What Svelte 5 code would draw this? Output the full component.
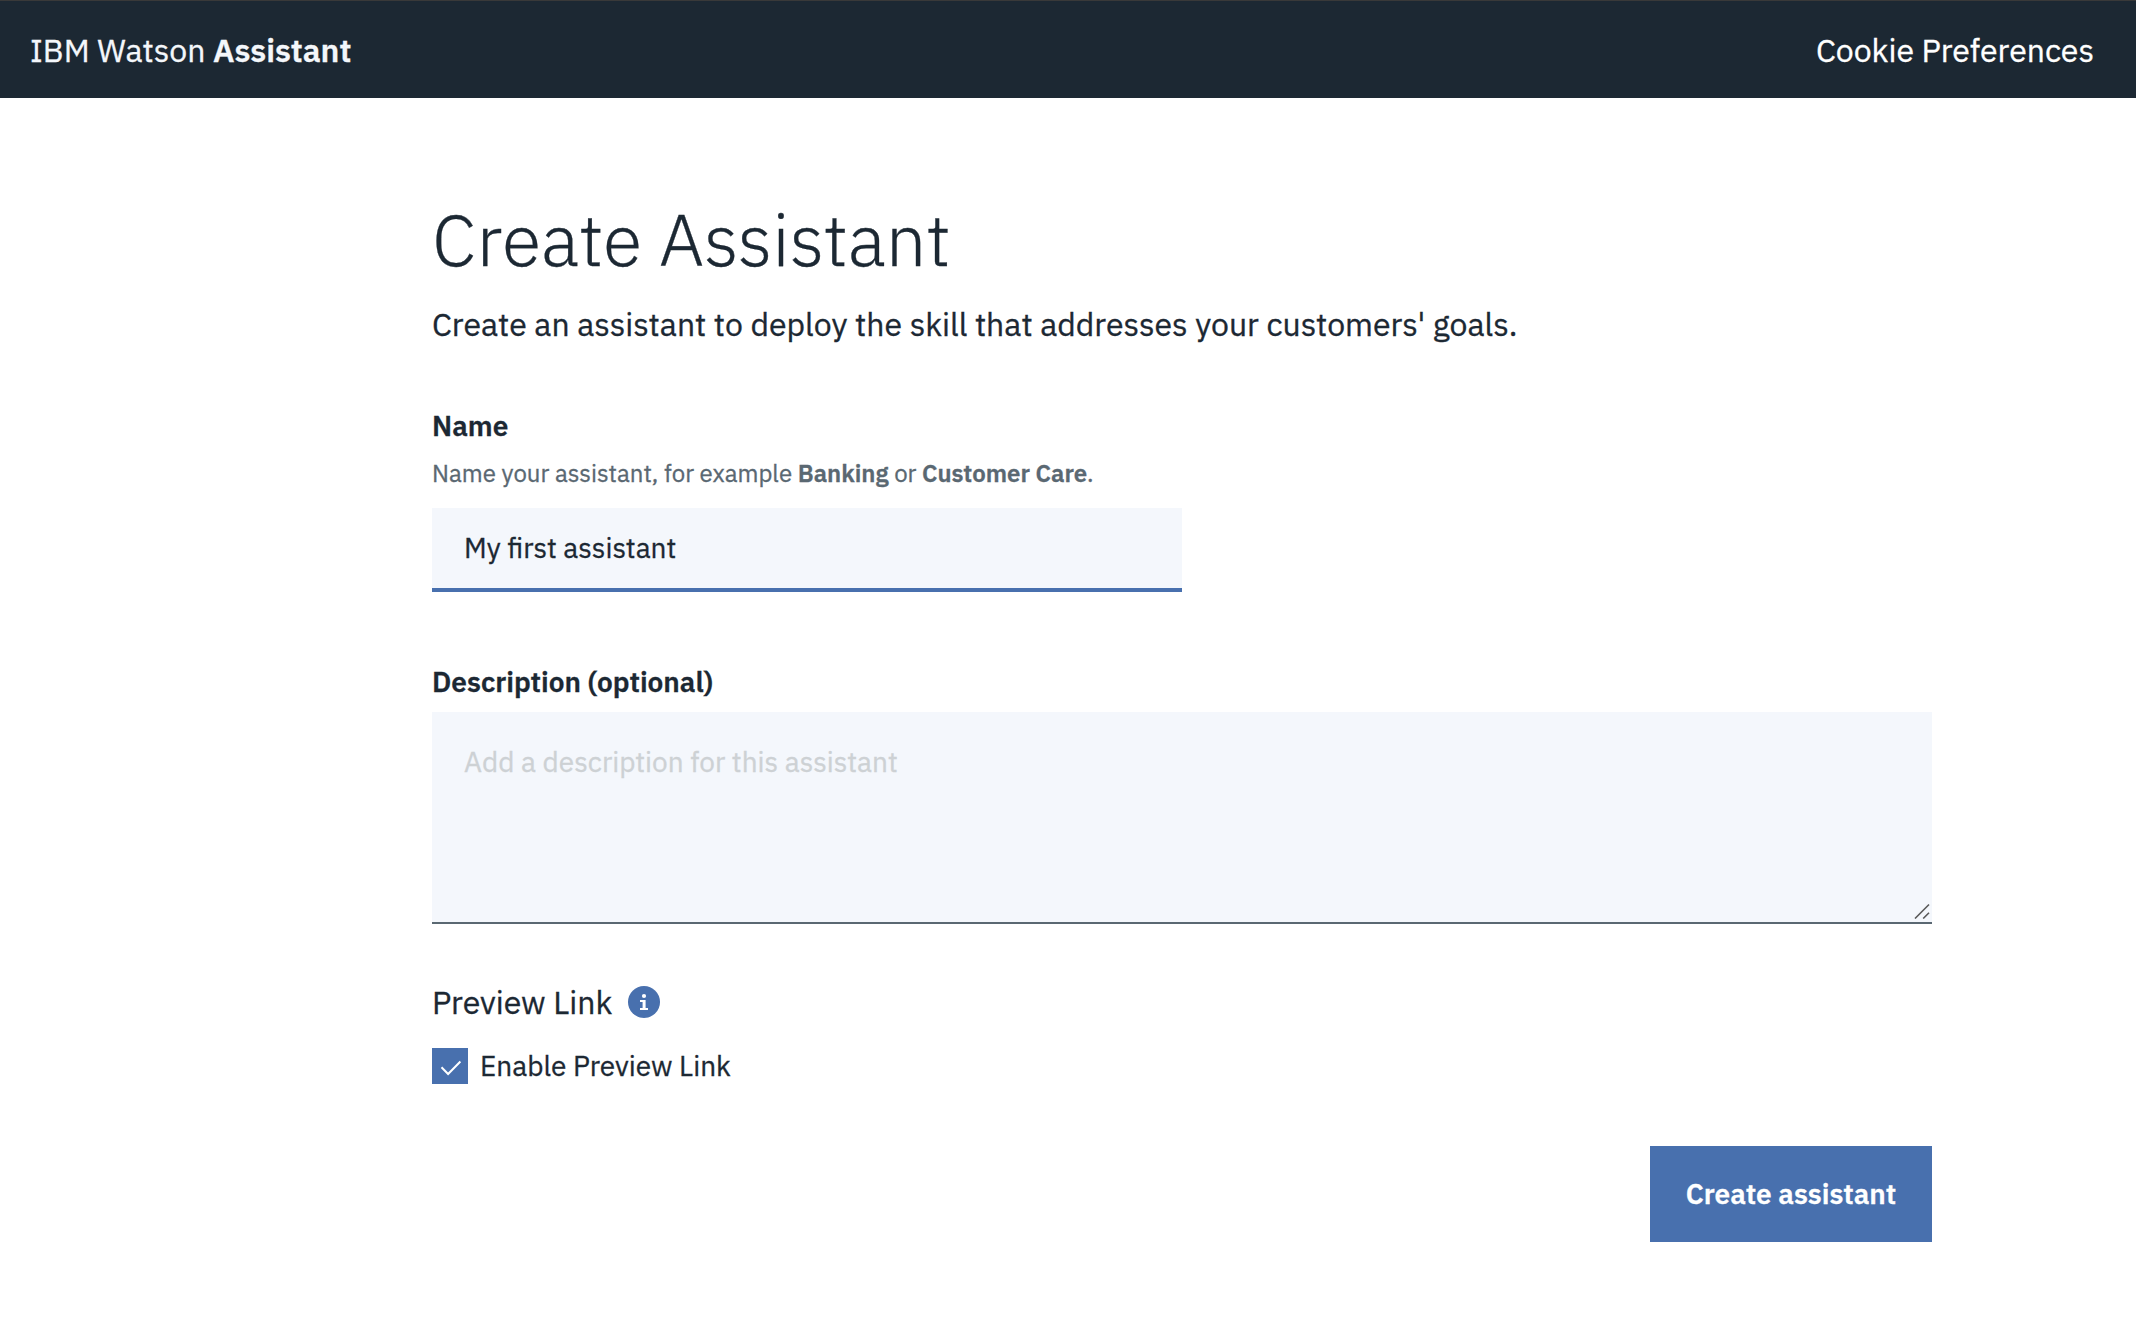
<script>
  let name = $state('My first assistant');
  let description = $state('');
  let previewEnabled = $state(true);
</script>

<header class="topbar">
  <div class="brand">IBM Watson <strong>Assistant</strong></div>
  <a class="cookies" href="#cookies">Cookie Preferences</a>
</header>

<main class="page">
  <h1>Create Assistant</h1>
  <p class="lead">Create an assistant to deploy the skill that addresses your customers' goals.</p>

  <div class="field">
    <label for="name">Name</label>
    <p class="helper">Name your assistant, for example <strong>Banking</strong> or <strong>Customer Care</strong>.</p>
    <input id="name" type="text" spellcheck="false" bind:value={name} />
  </div>

  <div class="field description">
    <label for="description">Description (optional)</label>
    <div class="area">
      <textarea id="description" placeholder="Add a description for this assistant" bind:value={description}></textarea>
      <svg class="grip" viewBox="0 0 16 16" aria-hidden="true">
        <path d="M1 15.5 15 1.5M9.2 15.5 15 9.7" />
      </svg>
    </div>
  </div>

  <h2>
    Preview Link
    <svg class="info" viewBox="0 0 32 32" aria-hidden="true">
      <circle cx="16" cy="16" r="16" fill="#4870ae" />
      <circle cx="16" cy="10" r="2.1" fill="#fff" />
      <path d="M12 14h5.6v8H20v2h-8v-2h2.6v-6H12z" fill="#fff" />
    </svg>
  </h2>

  <label class="check">
    <input type="checkbox" bind:checked={previewEnabled} />
    <span class="box">
      {#if previewEnabled}
        <svg viewBox="0 0 36 36" aria-hidden="true"><path d="M9.5 19.3 16.1 26 28.4 13.5" /></svg>
      {/if}
    </span>
    Enable Preview Link
  </label>

  <div class="actions">
    <button type="button">Create assistant</button>
  </div>
</main>

<style>
  :global(body) {
    background: #fff;
    color: #1c2833;
    font-family: 'IBM Plex Sans', Roboto, 'Liberation Sans', sans-serif;
    -webkit-text-stroke: 0.3px;
  }

  .topbar {
    box-sizing: border-box;
    display: flex;
    align-items: center;
    justify-content: space-between;
    height: 98px;
    padding: 1px 42px 0 30px;
    border-top: 1px solid #393939;
    background: #1c2833;
    color: #f4f7fb;
    font-size: 32px;
    line-height: 40px;
  }

  .brand strong {
    font-weight: 600;
  }

  .cookies {
    color: #fff;
    text-decoration: none;
  }

  .page {
    display: flex;
    flex-direction: column;
    width: 1500px;
    padding: 97px 0 0 432px;
  }

  h1,
  h2,
  p {
    margin: 0;
  }

  h1 {
    font-size: 72px;
    font-weight: 300;
    line-height: 88px;
  }

  .lead {
    margin: 21px 0 64px;
    font-size: 32px;
    line-height: 40px;
  }

  .field {
    display: flex;
    flex-direction: column;
  }

  .field label {
    font-size: 28px;
    font-weight: 600;
    line-height: 36px;
  }

  .helper {
    margin: 13px 0 19px;
    color: #5a6872;
    font-size: 24px;
    line-height: 32px;
  }

  .helper strong {
    font-weight: 600;
  }

  #name {
    box-sizing: border-box;
    width: 750px;
    height: 84px;
    padding: 0 32px 2px;
    border: 0;
    border-bottom: 4px solid #4870ae;
    border-radius: 0;
    outline: 0;
    background: #f4f7fc;
    color: #1c2833;
    font: 400 28px/40px 'IBM Plex Sans', Roboto, sans-serif;
  }

  .description {
    gap: 12px;
    margin-top: 72px;
  }

  .area {
    position: relative;
    display: flex;
  }

  textarea {
    box-sizing: border-box;
    width: 100%;
    height: 212px;
    padding: 30px 32px;
    border: 0;
    border-bottom: 2px solid #5a6872;
    border-radius: 0;
    outline: 0;
    resize: none;
    background: #f4f7fc;
    color: #1c2833;
    font: 400 28px/40px 'IBM Plex Sans', Roboto, sans-serif;
  }

  textarea::placeholder {
    color: #cdd1d4;
  }

  .grip {
    position: absolute;
    right: 2px;
    bottom: 5px;
    width: 16px;
    height: 16px;
    fill: none;
    stroke: #5a5a5a;
    stroke-width: 1.6;
  }

  h2 {
    display: flex;
    align-items: center;
    gap: 16px;
    margin-top: 58px;
    font-size: 32px;
    font-weight: 400;
    line-height: 40px;
  }

  .info {
    width: 32px;
    height: 32px;
  }

  .check {
    display: flex;
    align-items: center;
    gap: 12px;
    height: 36px;
    margin-top: 26px;
    font-size: 28px;
    line-height: 36px;
  }

  .check input {
    position: absolute;
    opacity: 0;
  }

  .box {
    width: 36px;
    height: 36px;
    background: #4870ae;
  }

  .box svg {
    display: block;
    fill: none;
    stroke: #fff;
    stroke-width: 2;
  }

  .actions {
    display: flex;
    justify-content: flex-end;
    margin-top: 62px;
  }

  button {
    width: 282px;
    height: 96px;
    padding: 0;
    border: 0;
    background: #4870ae;
    color: #fff;
    font: 600 28px/36px 'IBM Plex Sans', Roboto, sans-serif;
  }
</style>
